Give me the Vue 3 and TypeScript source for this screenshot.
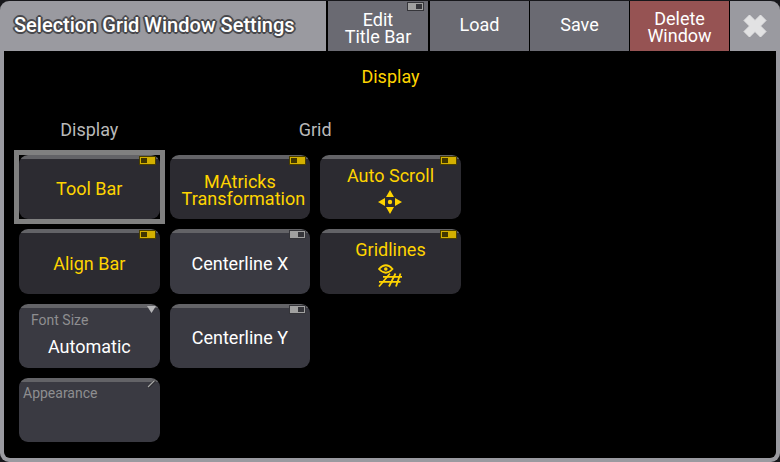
<script setup lang="ts">
import { reactive, ref } from 'vue'

interface Toggle {
  id: string
  lines: string[]
  on: boolean
  col: number
  row: number
  icon?: 'scroll' | 'gridlines'
}

const toggles = reactive<Toggle[]>([
  { id: 'tool-bar', lines: ['Tool Bar'], on: true, col: 1, row: 1 },
  { id: 'matricks', lines: ['MAtricks', 'Transformation'], on: true, col: 2, row: 1 },
  { id: 'auto-scroll', lines: ['Auto Scroll'], on: true, col: 3, row: 1, icon: 'scroll' },
  { id: 'align-bar', lines: ['Align Bar'], on: true, col: 1, row: 2 },
  { id: 'center-x', lines: ['Centerline X'], on: false, col: 2, row: 2 },
  { id: 'gridlines', lines: ['Gridlines'], on: true, col: 3, row: 2, icon: 'gridlines' },
  { id: 'center-y', lines: ['Centerline Y'], on: false, col: 2, row: 3 },
])

const focused = ref('tool-bar')
const editTitleBar = ref(false)
const fontSize = ref('Automatic')

function press(t: Toggle) {
  t.on = !t.on
  focused.value = t.id
}
</script>

<template>
  <main class="window">
    <header class="title-bar">
      <h1 class="title">Selection Grid Window Settings</h1>
      <button class="bar-button edit" type="button" :aria-pressed="editTitleBar" @click="editTitleBar = !editTitleBar">
        <span>Edit<br />Title Bar</span>
        <span class="switch" :class="{ on: editTitleBar }"></span>
      </button>
      <button class="bar-button" type="button">Load</button>
      <button class="bar-button" type="button">Save</button>
      <button class="bar-button delete" type="button">Delete<br />Window</button>
      <button class="close" type="button" aria-label="Close">
        <svg width="24" height="24" viewBox="0 0 24 24" aria-hidden="true">
          <path d="M6.5 1 12 6.5 17.5 1 23 6.5 17.5 12 23 17.5 17.5 23 12 17.5 6.5 23 1 17.5 6.5 12 1 6.5Z" fill="#e2e2e3" stroke="#e2e2e3" stroke-linejoin="round" />
        </svg>
      </button>
    </header>

    <section class="content">
      <h2 class="section-title">Display</h2>
      <div class="groups">
        <h3 class="group">Display</h3>
        <h3 class="group wide">Grid</h3>
      </div>
      <div class="tiles">
        <button
          v-for="t in toggles"
          :key="t.id"
          type="button"
          class="tile"
          :class="[`col-${t.col}`, `row-${t.row}`, { on: t.on, focused: focused === t.id, tall: t.icon || t.lines.length > 1 }]"
          :aria-pressed="t.on"
          @click="press(t)"
        >
          <span class="switch" :class="{ on: t.on }"></span>
          <span class="caption">
            <span v-for="line in t.lines" :key="line" class="line">{{ line }}</span>
          </span>
          <svg v-if="t.icon === 'scroll'" class="icon" width="24" height="24" viewBox="0 0 24 24" aria-hidden="true">
            <path d="M12 0 16 7H8ZM12 24 8 17h8ZM0 12 7 8v8ZM24 12 17 16V8Z" fill="#ffd400" />
            <circle cx="12" cy="12" r="2.2" fill="#ffd400" />
          </svg>
          <svg v-if="t.icon === 'gridlines'" class="icon" width="24" height="24" viewBox="0 0 24 24" fill="none" stroke="#ffd400" aria-hidden="true">
            <path d="M1 5Q8 -2.5 14.5 5Q8 12.5 1 5Z" stroke-width="1.8" />
            <circle cx="7.8" cy="5" r="1.8" fill="#ffd400" stroke="none" />
            <path d="M5 12.8H24M1 17.8H22.5" stroke-width="1.8" />
            <path d="M12 9.5 1 22.5M17.5 9.5 11 22.5M22.5 9.5 18 22.5" stroke-width="1.8" />
          </svg>
        </button>

        <label class="tile field col-1 row-3">
          <span class="field-name">Font Size</span>
          <select v-model="fontSize" class="field-value">
            <option>Automatic</option>
          </select>
          <svg class="corner arrow" width="9" height="7" viewBox="0 0 9 7" aria-hidden="true">
            <path d="M0 0H9L4.5 7Z" fill="#b4b4b6" />
          </svg>
        </label>

        <button class="tile field appearance col-1 row-4" type="button">
          <span class="field-name">Appearance</span>
          <svg class="corner pen" width="9" height="9" viewBox="0 0 9 9" aria-hidden="true">
            <path d="M1 8.5 8 1.5" stroke="#2c2c30" stroke-width="3" />
            <path d="M1 8 7.5 1.5" stroke="#a8a8a8" stroke-width="1.3" />
          </svg>
        </button>
      </div>
    </section>
  </main>
</template>

<style>
body {
  margin: 0;
  background: #17171b;
}
</style>

<style scoped>
.window {
  box-sizing: border-box;
  display: flex;
  flex-direction: column;
  min-height: calc(100vh - 2px);
  margin: 1px 0;
  background: #9a9aa0;
  border-radius: 9px;
  overflow: hidden;
  color: #fff;
  font: 18px/17px Roboto, sans-serif;
}
button,
select {
  margin: 0;
  padding: 0;
  border: 0;
  color: inherit;
  font: inherit;
}
h1,
h2,
h3 {
  margin: 0;
  font-size: 18px;
  font-weight: 400;
}
.title-bar {
  display: flex;
  gap: 1px;
  height: 50px;
  background: #000;
}
.title {
  flex: 1;
  display: flex;
  align-items: center;
  padding: 0 0 2px 14px;
  margin-right: 1px;
  background: #9a9aa0;
  font-size: 20px;
  font-weight: 500;
  white-space: nowrap;
  text-shadow: -2px 0 #48484c, 2px 0 #48484c, 0 -2px #48484c, 0 2px #48484c,
    -1px -1px 1px #3c3c40, 1px 1px 1px #3c3c40, 1px -1px 1px #3c3c40, -1px 1px 1px #3c3c40;
}
.bar-button {
  position: relative;
  width: 99px;
  padding-bottom: 4px;
  background: #6a6a72;
}
.edit {
  width: 100px;
  margin-right: 1px;
  padding: 4px 0 0;
}
.delete {
  padding: 2px 0 0;
  background: #965353;
}
.close {
  display: flex;
  align-items: center;
  justify-content: center;
  width: 50px;
  background: #9a9aa0;
}
.content {
  flex: 1;
  margin: 0 4px 4px;
  padding: 16px 14px 16px 15px;
  background: #000;
  border-radius: 0 0 6px 6px;
}
.section-title {
  color: #ffd400;
  line-height: 20px;
  text-align: center;
}
.groups,
.tiles {
  display: grid;
  grid-template-columns: repeat(5, 1fr);
  column-gap: 10px;
}
.groups {
  margin: 33px 0 15px;
}
.group {
  color: #b9b9b9;
  line-height: 20px;
  text-align: center;
}
.wide {
  grid-column: span 2;
}
.tiles {
  grid-template-rows: 64px 65px 64px 64px;
  row-gap: 10px;
}
.tile {
  position: relative;
  box-sizing: border-box;
  display: flex;
  flex-direction: column;
  align-items: center;
  justify-content: center;
  min-width: 0;
  padding-top: 3px;
  border-radius: 9px;
  background: linear-gradient(#636367 4px, #3a3a42 4px);
}
.tile.tall {
  padding-top: 6px;
}
.tile.on {
  background: linear-gradient(#636367 4px, #2c2b31 4px);
  color: #ffd400;
}
.focused {
  outline: 0;
}
.focused::before {
  content: '';
  position: absolute;
  inset: -5px;
  border: 5px solid #808080;
}
.caption {
  box-sizing: border-box;
  width: 100%;
  padding: 0 12px;
  text-align: center;
}
.line {
  display: block;
  white-space: nowrap;
}
.icon {
  margin-top: 6px;
}
.switch {
  position: absolute;
  top: 1px;
  right: 4px;
  box-sizing: border-box;
  width: 17px;
  height: 9px;
  border: 1px solid #35353a;
  background: linear-gradient(90deg, #a0a0a0 8px, #35353a 8px 14px, #a0a0a0 14px);
  box-shadow: inset 0 1px #a0a0a0, inset 0 -1px #a0a0a0;
}
.switch.on {
  border-color: #4a3f00;
  background: linear-gradient(90deg, #d4b000 1px, #403600 1px 7px, #d4b000 7px);
  box-shadow: inset 0 1px #d4b000, inset 0 -1px #d4b000;
}
.col-1 {
  grid-column: 1;
}
.col-2 {
  grid-column: 2;
}
.col-3 {
  grid-column: 3;
}
.row-1 {
  grid-row: 1;
}
.row-2 {
  grid-row: 2;
}
.row-3 {
  grid-row: 3;
}
.row-4 {
  grid-row: 4;
}
.field {
  align-items: stretch;
  justify-content: flex-start;
  padding-top: 8px;
}
.field-name {
  padding-left: 12px;
  color: #8e8e90;
  font-size: 14px;
  line-height: 16px;
  text-align: left;
}
.appearance {
  padding-top: 7px;
}
.appearance .field-name {
  padding-left: 4px;
}
.field-value {
  appearance: none;
  height: 22px;
  margin-top: 7px;
  background: transparent;
  text-align: center;
  text-align-last: center;
}
.corner {
  position: absolute;
}
.arrow {
  top: 2px;
  right: 4px;
}
.pen {
  top: 1px;
  right: 4px;
}
</style>
